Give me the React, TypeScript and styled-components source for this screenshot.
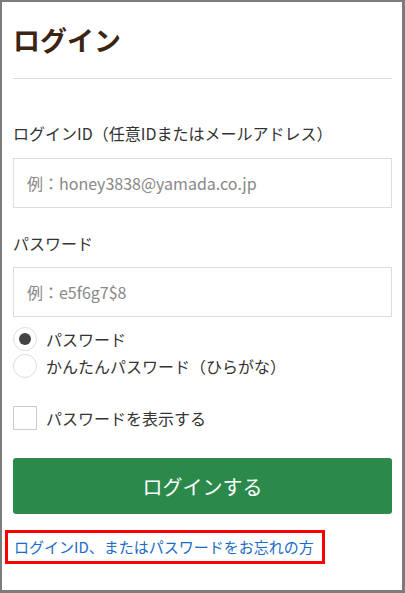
import { useState } from "react";
import styled, { createGlobalStyle } from "styled-components";

const GlobalStyle = createGlobalStyle`
  html, body {
    margin: 0;
    padding: 0;
    background: #ffffff;
  }
  body {
    font-family: "Noto Sans CJK JP", "Noto Sans", sans-serif;
    color: #333333;
  }
  * {
    box-sizing: border-box;
  }
`;

const Frame = styled.div`
  width: 405px;
  height: 593px;
  border: 2px solid #7b7b7b;
  border-right-width: 3px;
  border-bottom-width: 3px;
  background: #ffffff;
  padding: 18px 10px 0 11px;
  display: flex;
  flex-direction: column;
`;

const Title = styled.h1`
  margin: 0;
  font-size: 27px;
  line-height: 40px;
  font-weight: 700;
  color: #3b2412;
  padding-bottom: 18px;
  border-bottom: 1px solid #dddddd;
`;

const Form = styled.form`
  display: flex;
  flex-direction: column;
  padding-top: 42px;
`;

const Label = styled.label`
  font-size: 16px;
  line-height: 24px;
  color: #333333;
  margin-bottom: 13px;
`;

const PasswordLabel = styled(Label)`
  margin-bottom: 12px;
`;

const TextInput = styled.input`
  width: 100%;
  height: 50px;
  border: 1px solid #dddddd;
  border-radius: 0;
  padding: 0 13px;
  font-family: inherit;
  font-size: 16px;
  color: #333333;
  outline: none;
  margin-bottom: 23px;

  &::placeholder {
    color: #888888;
  }

  &:last-of-type {
    margin-bottom: 10px;
  }
`;

const RadioGroup = styled.div`
  display: flex;
  flex-direction: column;
  gap: 3px;
  margin-bottom: 28px;
`;

const Choice = styled.label`
  display: flex;
  align-items: center;
  gap: 9px;
  font-size: 16px;
  line-height: 24px;
  color: #333333;
  cursor: pointer;
`;

const RadioMark = styled.span<{ $checked: boolean }>`
  width: 24px;
  height: 24px;
  border-radius: 50%;
  border: 1px solid #dddddd;
  display: flex;
  align-items: center;
  justify-content: center;
  flex-shrink: 0;

  &::after {
    content: "";
    width: 12px;
    height: 12px;
    border-radius: 50%;
    background: #444444;
    display: ${(p) => (p.$checked ? "block" : "none")};
  }
`;

const CheckMark = styled.span`
  width: 24px;
  height: 24px;
  border: 1px solid #cccccc;
  flex-shrink: 0;
`;

const SubmitButton = styled.button`
  margin-top: 28px;
  height: 56px;
  width: 100%;
  border: none;
  border-radius: 3px;
  background: #2b8a4b;
  color: #ffffff;
  font-family: inherit;
  font-size: 20px;
  cursor: pointer;
`;

const ForgotLink = styled.a`
  align-self: flex-start;
  margin: 16px 0 0 -8px;
  padding: 2px 8px 2px 6px;
  border: 3px solid #ff0000;
  font-size: 15px;
  line-height: 24px;
  color: #1a6dc6;
  text-decoration: none;
`;

export default function App() {
  const [mode, setMode] = useState("password");

  return (
    <>
      <GlobalStyle />
      <Frame>
        <Title>ログイン</Title>
        <Form onSubmit={(e) => e.preventDefault()}>
          <Label>ログインID（任意IDまたはメールアドレス）</Label>
          <TextInput placeholder="例：honey3838@yamada.co.jp" />
          <PasswordLabel>パスワード</PasswordLabel>
          <TextInput placeholder="例：e5f6g7$8" />
          <RadioGroup>
            <Choice onClick={() => setMode("password")}>
              <RadioMark $checked={mode === "password"} />
              パスワード
            </Choice>
            <Choice onClick={() => setMode("easy")}>
              <RadioMark $checked={mode === "easy"} />
              かんたんパスワード（ひらがな）
            </Choice>
          </RadioGroup>
          <Choice>
            <CheckMark />
            パスワードを表示する
          </Choice>
          <SubmitButton type="submit">ログインする</SubmitButton>
          <ForgotLink href="#">ログインID、またはパスワードをお忘れの方</ForgotLink>
        </Form>
      </Frame>
    </>
  );
}
